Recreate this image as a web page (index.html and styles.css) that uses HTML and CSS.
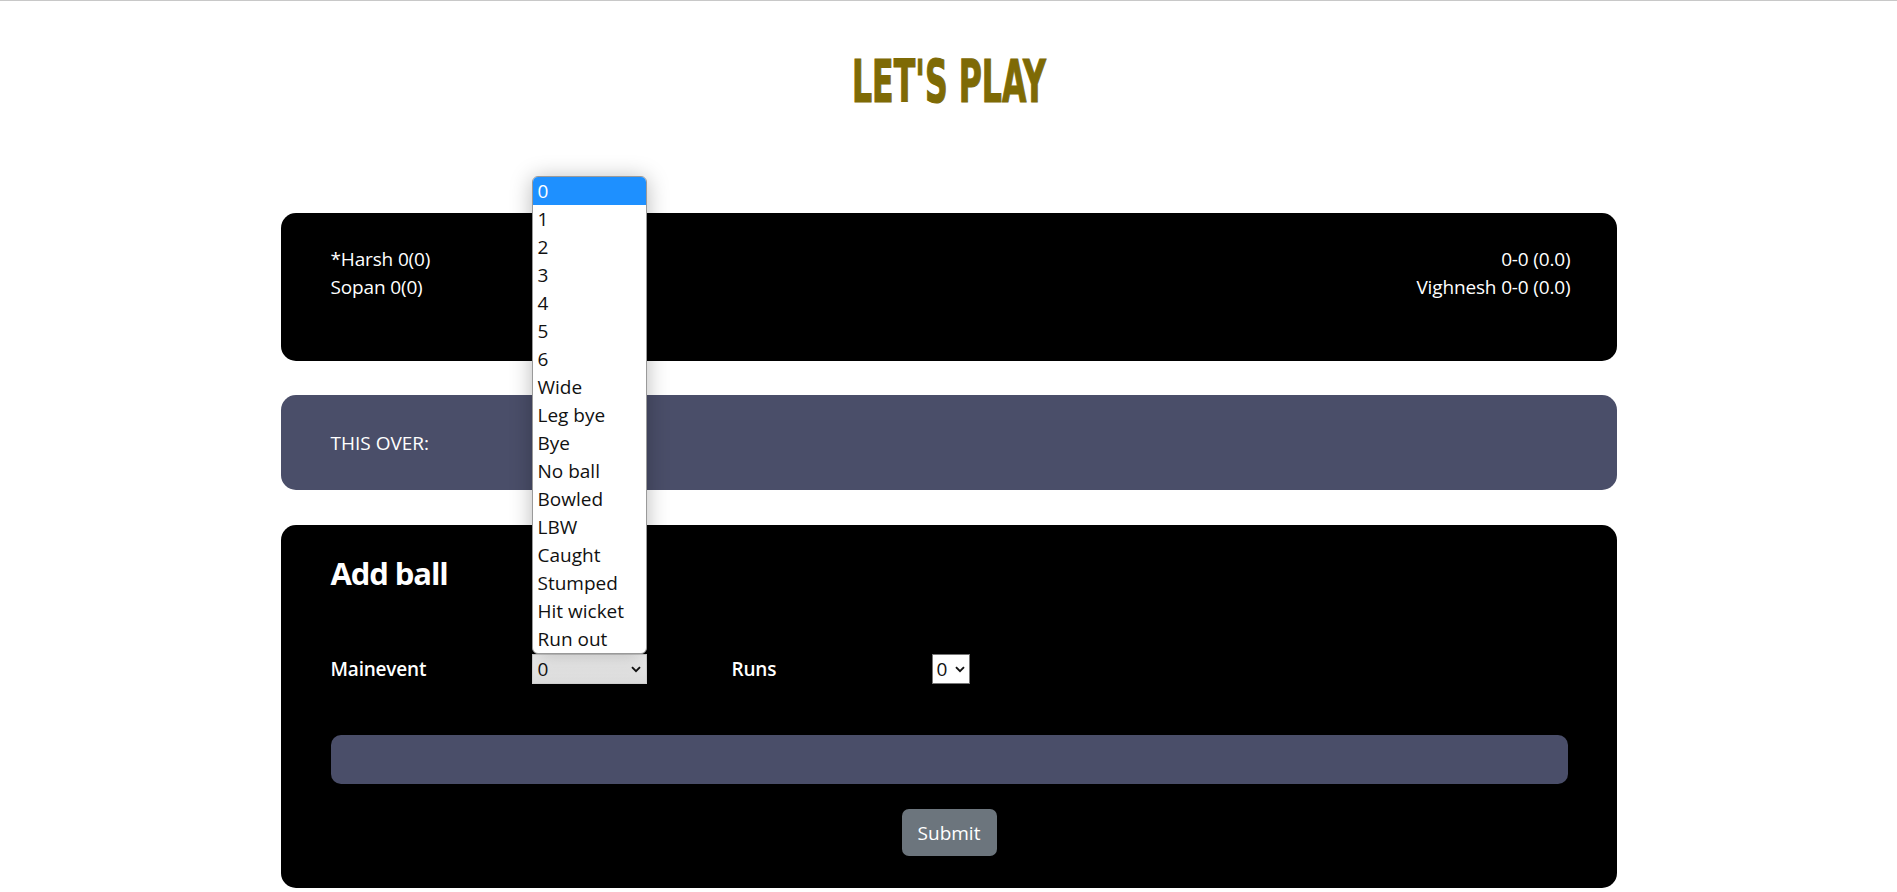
FILE: index.html
```html
<!DOCTYPE html>
<html lang="en">
<head>
<meta charset="utf-8">
<title>Let's Play</title>
<link rel="stylesheet" href="styles.css">
</head>
<body>
<div class="page">
  <h1 class="title"><span class="title-text">LET'S PLAY</span></h1>
  <main class="container">
    <section class="card score">
      <div class="batters">
        <div class="line">*Harsh 0(0)</div>
        <div class="line">Sopan 0(0)</div>
      </div>
      <div class="bowling">
        <div class="line">0-0 (0.0)</div>
        <div class="line">Vighnesh 0-0 (0.0)</div>
      </div>
    </section>

    <section class="card over">THIS OVER:</section>

    <section class="card add">
      <h2 class="add-title">Add ball</h2>
      <div class="form-row">
        <label class="field-label">Mainevent</label>
        <div class="select main-select">
          <span class="select-value">0</span>
          <svg class="chev" width="10" height="7" viewBox="0 0 10 7"><path d="M1 1.2 L5 5.2 L9 1.2" fill="none" stroke="#111" stroke-width="1.9"/></svg>
          <ul class="dropdown">
            <li class="opt active">0</li>
            <li class="opt">1</li>
            <li class="opt">2</li>
            <li class="opt">3</li>
            <li class="opt">4</li>
            <li class="opt">5</li>
            <li class="opt">6</li>
            <li class="opt">Wide</li>
            <li class="opt">Leg bye</li>
            <li class="opt">Bye</li>
            <li class="opt">No ball</li>
            <li class="opt">Bowled</li>
            <li class="opt">LBW</li>
            <li class="opt">Caught</li>
            <li class="opt">Stumped</li>
            <li class="opt">Hit wicket</li>
            <li class="opt">Run out</li>
          </ul>
        </div>
        <label class="field-label">Runs</label>
        <div class="select runs-select">
          <span class="select-value">0</span>
          <svg class="chev" width="10" height="7" viewBox="0 0 10 7"><path d="M1 1.2 L5 5.2 L9 1.2" fill="none" stroke="#111" stroke-width="1.9"/></svg>
        </div>
      </div>
      <div class="bar"></div>
      <div class="actions"><button class="btn" type="button">Submit</button></div>
    </section>
  </main>
</div>
</body>
</html>
```

FILE: styles.css
```css
* { box-sizing: border-box; }

html, body {
  margin: 0;
  padding: 0;
  background: #ffffff;
}

body {
  border-top: 1px solid #c8c8c8;
  font-family: "Open Sans", "Noto Sans", "DejaVu Sans", sans-serif;
  color: #ffffff;
}

.title {
  margin: 51px 0 0;
  height: 59px;
  line-height: 59px;
  font-family: "DejaVu Sans Condensed", "DejaVu Sans", sans-serif;
  font-stretch: condensed;
  font-weight: 700;
  font-size: 59px;
  color: #7e6a05;
  text-align: center;
}

.title-text {
  display: inline-block;
  transform: scaleX(0.595);
  -webkit-text-stroke: 1.2px #7e6a05;
}

.container {
  width: 1336px;
  margin: 102px auto 0;
}

.card {
  border-radius: 15px;
  background: #000000;
}

.score {
  display: flex;
  justify-content: space-between;
  padding: 32px 46px 60px 50px;
  font-size: 19px;
  line-height: 28px;
  font-weight: 500;
  letter-spacing: -0.15px;
}

.bowling { text-align: right; }

.over {
  margin-top: 34px;
  height: 95px;
  display: flex;
  align-items: center;
  padding-left: 50px;
  background: #4a4e69;
  font-size: 19px;
  line-height: 28px;
  font-weight: 500;
}

.add {
  margin-top: 35px;
  padding: 30px 49px 32px 50px;
}

.add-title {
  margin: 0;
  font-size: 31px;
  line-height: 37px;
  font-weight: 700;
  letter-spacing: -1.1px;
}

.form-row {
  margin-top: 62px;
  display: grid;
  grid-template-columns: 201px 200px 200px auto;
  align-items: center;
  height: 30px;
}

.field-label {
  font-size: 19px;
  line-height: 28px;
  font-weight: 600;
  letter-spacing: -0.2px;
}

.select {
  position: relative;
  height: 30px;
  display: flex;
  align-items: center;
  justify-content: space-between;
  color: #111;
  font-size: 19px;
}

.main-select {
  width: 115px;
  padding: 0 5px 0 5px;
  border: 1px solid #cfcfcf;
  background: linear-gradient(180deg, #f6f6f6 0%, #e4e4e4 55%, #dadada 100%);
}

.runs-select {
  width: 38px;
  padding: 0 4px 0 4px;
  border: 1px solid #767676;
  background: #ffffff;
}

.chev { display: block; flex: none; }

.dropdown {
  position: absolute;
  left: -1px;
  bottom: calc(100% + 1px);
  width: 115px;
  margin: 0;
  padding: 0;
  list-style: none;
  background: #ffffff;
  border: 1px solid #9a9a9a;
  border-radius: 6px;
  overflow: hidden;
  box-shadow: 0 2px 22px rgba(0, 0, 0, 0.28);
  z-index: 5;
}

.opt {
  height: 28px;
  line-height: 28px;
  padding-left: 5px;
  font-size: 19px;
  color: #111111;
  white-space: nowrap;
}

.opt.active {
  background: #1e90ff;
  color: #ffffff;
}

.bar {
  margin-top: 51px;
  height: 49px;
  border-radius: 10px;
  background: #4a4e69;
}

.actions {
  margin-top: 25px;
  display: flex;
  justify-content: center;
}

.btn {
  height: 47px;
  width: 95px;
  padding: 0;
  border: none;
  border-radius: 7px;
  background: #6c757d;
  color: #ffffff;
  font-family: "Open Sans", "Noto Sans", sans-serif;
  font-size: 19px;
  line-height: 28px;
}
```
